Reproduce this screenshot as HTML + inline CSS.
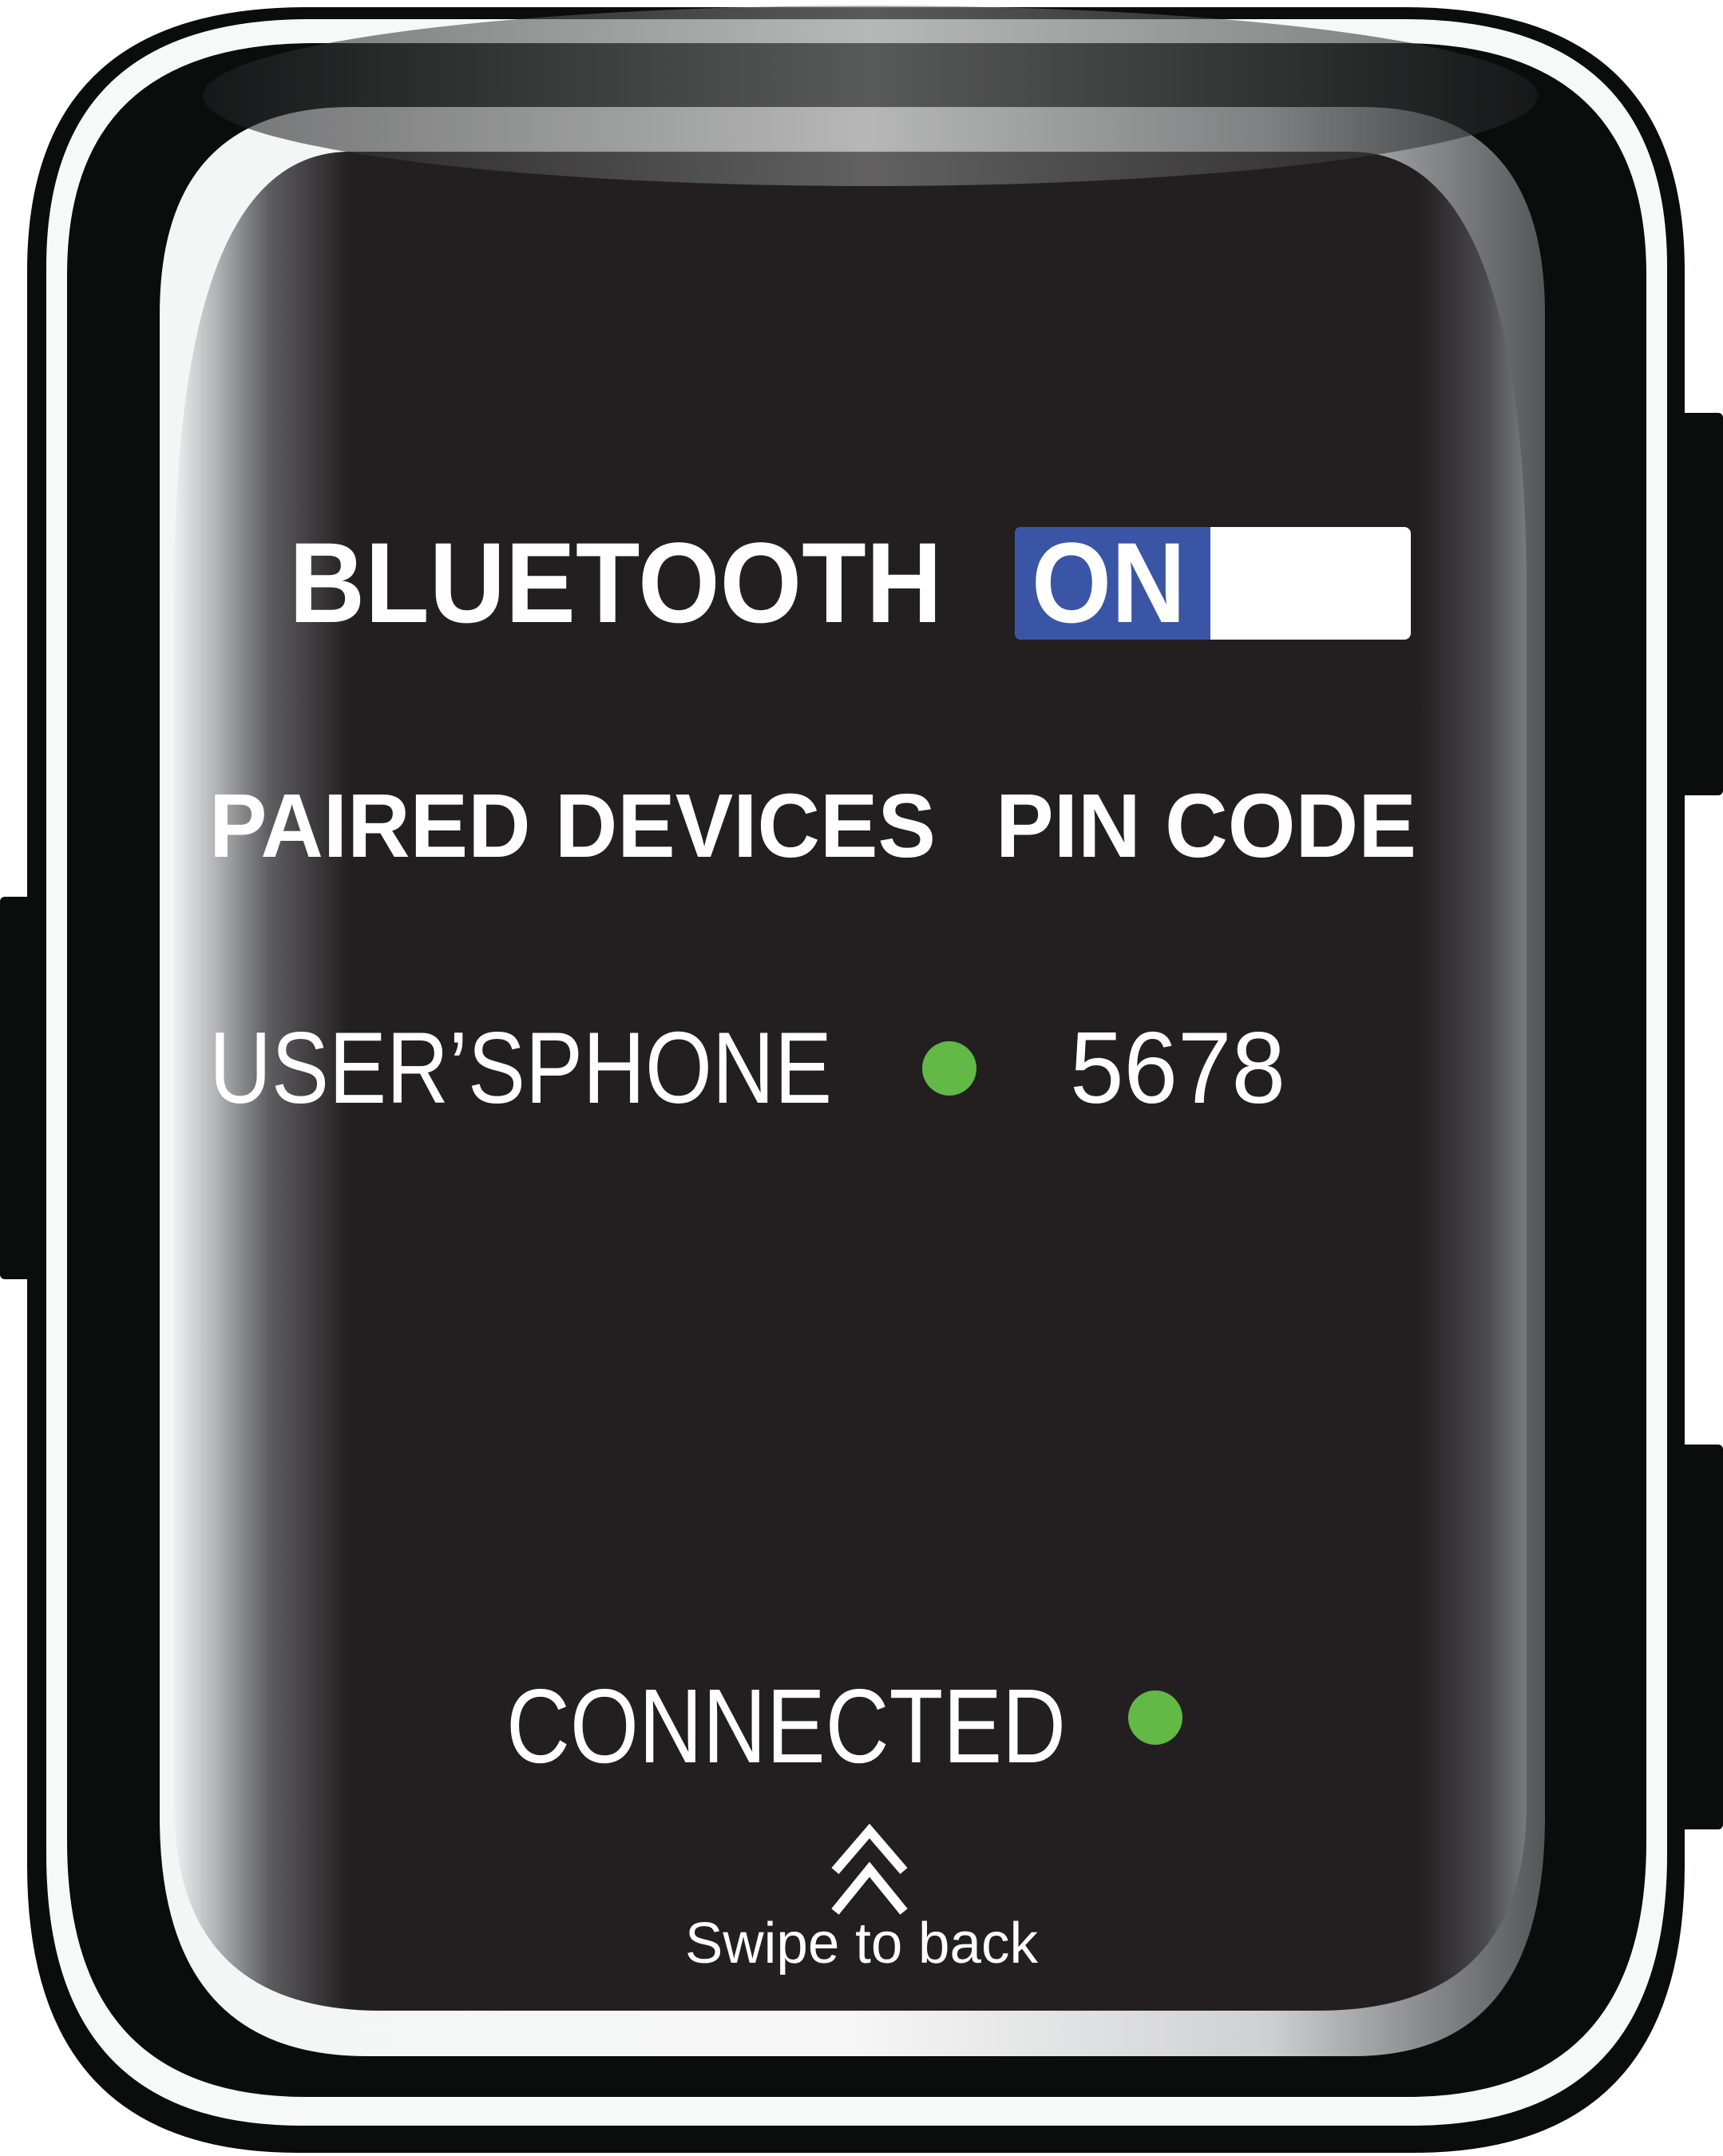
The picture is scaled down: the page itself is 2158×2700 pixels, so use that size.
<!DOCTYPE html>
<html><head><meta charset="utf-8"><style>
html,body{margin:0;padding:0;background:#fff;width:2158px;height:2700px;overflow:hidden}
svg{display:block}
text{font-family:"Liberation Sans",sans-serif;fill:#fff}
</style></head><body>
<svg width="2158" height="2700" viewBox="0 0 2158 2700" xmlns="http://www.w3.org/2000/svg">
<defs>
<linearGradient id="gl" x1="0" x2="1" y1="0" y2="0">
<stop offset="0" stop-color="#f4f5f5"/><stop offset="0.5" stop-color="#f6f6f6"/><stop offset="0.8" stop-color="#cfd0d2"/><stop offset="1" stop-color="#55565a"/>
</linearGradient>
<linearGradient id="sc" x1="0" x2="1" y1="0" y2="0">
<stop offset="0" stop-color="#eeeff0"/><stop offset="0.03" stop-color="#b5b6b9"/><stop offset="0.07" stop-color="#5e5e62"/><stop offset="0.13" stop-color="#231f20"/>
<stop offset="0.92" stop-color="#231f20"/><stop offset="0.97" stop-color="#4a4a4e"/><stop offset="1" stop-color="#7a7b7f"/>
</linearGradient>
<linearGradient id="hl" x1="0" x2="1" y1="0" y2="0">
<stop offset="0" stop-color="#1e1e20"/><stop offset="0.5" stop-color="#8c8d8c"/><stop offset="1" stop-color="#1e1e20"/>
</linearGradient>
</defs>
<rect x="2080" y="517" width="78" height="479" rx="6" fill="#0b0d0c"/>
<rect x="2080" y="1809" width="78" height="482" rx="6" fill="#0b0d0c"/>
<rect x="0" y="1123" width="80" height="479" rx="6" fill="#0b0d0c"/>
<path fill="#0b0d0c" d="M384,9 L1760,9 Q2110,9 2110,339 L2110,2336 Q2110,2696 1770,2696 L374,2696 Q34,2696 34,2336 L34,339 Q34,9 384,9 Z"/>
<path fill="#f7f9f8" d="M388,24 L1758,24 Q2088,24 2088,334 L2088,2322 Q2088,2662 1768,2662 L378,2662 Q58,2662 58,2322 L58,334 Q58,24 388,24 Z"/>
<path fill="#0b0d0c" d="M394,54 L1752,54 Q2062,54 2062,344 L2062,2306 Q2062,2626 1762,2626 L384,2626 Q84,2626 84,2306 L84,344 Q84,54 394,54 Z"/>
<path fill="url(#gl)" d="M440,134 L1705,134 Q1935,134 1935,394 L1935,2275 Q1935,2575 1695,2575 L460,2575 Q200,2575 200,2275 L200,394 Q200,134 440,134 Z"/>
<path fill="url(#sc)" d="M438,190 L1692,190 Q1912,190 1912,750 L1912,2258 Q1912,2518 1652,2518 L478,2518 Q218,2518 218,2258 L218,750 Q218,190 438,190 Z"/>
<ellipse cx="1090" cy="120" rx="836" ry="113" fill="url(#hl)" opacity="0.6"/>

<text x="362" y="779" font-size="143" font-weight="bold" textLength="818" lengthAdjust="spacingAndGlyphs">BLUETOOTH</text>
<rect x="1271" y="660" width="496" height="141" rx="8" fill="#fff"/>
<path d="M1279,660 L1516,660 L1516,801 L1279,801 Q1271,801 1271,793 L1271,668 Q1271,660 1279,660 Z" fill="#3a55a6"/>
<text x="1292" y="779" font-size="143" font-weight="bold" textLength="193" lengthAdjust="spacingAndGlyphs">ON</text>

<text x="262" y="1073" font-size="113" font-weight="bold" textLength="910" lengthAdjust="spacingAndGlyphs">PAIRED DEVICES</text>
<text x="1247" y="1073" font-size="113" font-weight="bold" textLength="527" lengthAdjust="spacingAndGlyphs">PIN CODE</text>

<text x="262" y="1381" font-size="127" textLength="780" lengthAdjust="spacingAndGlyphs">USER’SPHONE</text>
<circle cx="1189" cy="1338" r="34" fill="#62b946"/>
<text x="1340" y="1381" font-size="127" textLength="270" lengthAdjust="spacingAndGlyphs">5678</text>

<text x="634" y="2207" font-size="132" textLength="701" lengthAdjust="spacingAndGlyphs">CONNECTED</text>
<circle cx="1447" cy="2151" r="34" fill="#62b946"/>

<path d="M1046,2343 L1089,2293 L1132,2343 M1046,2394 L1089,2341 L1132,2394" stroke="#fff" stroke-width="12" fill="none"/>
<text x="858" y="2458" font-size="72" textLength="442" lengthAdjust="spacingAndGlyphs">Swipe to back</text>
</svg>
</body></html>
